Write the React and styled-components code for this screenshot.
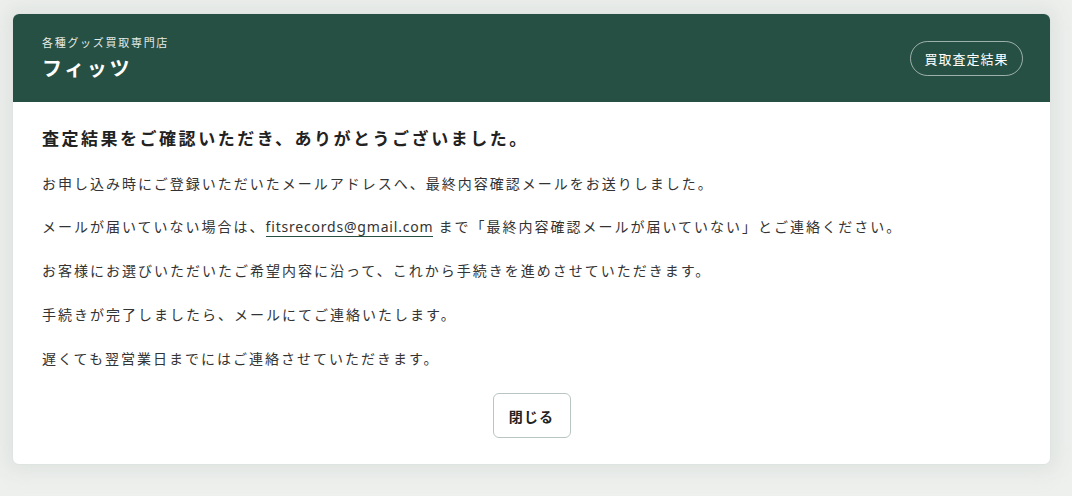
import React from "react";
import styled, { createGlobalStyle } from "styled-components";

const Global = createGlobalStyle`
  html, body { margin: 0; padding: 0; }
  body {
    background: #eef0ee;
    font-family: "Noto Sans CJK JP", "Noto Sans", sans-serif;
    color: #2b2b2b;
  }
`;

const Page = styled.div`
  padding: 13px 21px 30px 12px;
`;

const Card = styled.div`
  background: #fff;
  border-radius: 7px;
  border: 1px solid #dfe3e1;
  box-shadow: 0 0 18px 8px rgba(200, 208, 204, 0.35);
  overflow: hidden;
`;

const Header = styled.header`
  background: #265043;
  height: 88px;
  box-sizing: border-box;
  padding: 0 27px 0 29px;
  display: flex;
  align-items: center;
  justify-content: space-between;
`;

const Brand = styled.div`
  display: flex;
  flex-direction: column;
  gap: 4px;
`;

const Sub = styled.div`
  font-size: 11px;
  letter-spacing: 0.155em;
  line-height: 16px;
  color: #e3ebe7;
`;

const Title = styled.div`
  font-size: 20px;
  font-weight: 700;
  letter-spacing: 0.13em;
  line-height: 28px;
  color: #fff;
`;

const Pill = styled.button`
  height: 35px;
  width: 113px;
  border-radius: 18px;
  border: 1px solid rgba(255, 255, 255, 0.55);
  background: transparent;
  color: #fff;
  font-family: inherit;
  font-size: 13px;
  letter-spacing: 0.08em;
  padding: 0;
`;

const Body = styled.div`
  padding: 23px 29px 26px;
  display: flex;
  flex-direction: column;
`;

const Heading = styled.h2`
  margin: 0 0 20px;
  font-size: 17px;
  font-weight: 700;
  letter-spacing: 0.148em;
  line-height: 25.5px;
  color: #222;
`;

const Paras = styled.div`
  display: flex;
  flex-direction: column;
  gap: 18.7px;
`;

const P = styled.p`
  margin: 0;
  font-size: 14px;
  line-height: 25.2px;
  letter-spacing: 0.143em;
  color: #333;
`;

const Mail = styled.a`
  color: #333;
  text-decoration: none;
  border-bottom: 1px solid #265043;
  letter-spacing: 0.057em;
  font-family: "Noto Sans", sans-serif;
  font-size: 14px;
`;

const Actions = styled.div`
  display: flex;
  justify-content: center;
  margin-top: 22px;
`;

const Close = styled.button`
  width: 78px;
  height: 45px;
  border: 1px solid #b9c5c3;
  border-radius: 6px;
  background: #fff;
  font-family: inherit;
  font-size: 14px;
  font-weight: 700;
  letter-spacing: 0.08em;
  color: #222;
`;

export default function App() {
  return (
    <>
      <Global />
      <Page>
        <Card>
          <Header>
            <Brand>
              <Sub>各種グッズ買取専門店</Sub>
              <Title>フィッツ</Title>
            </Brand>
            <Pill>買取査定結果</Pill>
          </Header>
          <Body>
            <Heading>査定結果をご確認いただき、ありがとうございました。</Heading>
            <Paras>
              <P>お申し込み時にご登録いただいたメールアドレスへ、最終内容確認メールをお送りしました。</P>
              <P>
                メールが届いていない場合は、<Mail href="#">fitsrecords@gmail.com</Mail> まで「最終内容確認メールが届いていない」とご連絡ください。
              </P>
              <P>お客様にお選びいただいたご希望内容に沿って、これから手続きを進めさせていただきます。</P>
              <P>手続きが完了しましたら、メールにてご連絡いたします。</P>
              <P>遅くても翌営業日までにはご連絡させていただきます。</P>
            </Paras>
            <Actions>
              <Close>閉じる</Close>
            </Actions>
          </Body>
        </Card>
      </Page>
    </>
  );
}
